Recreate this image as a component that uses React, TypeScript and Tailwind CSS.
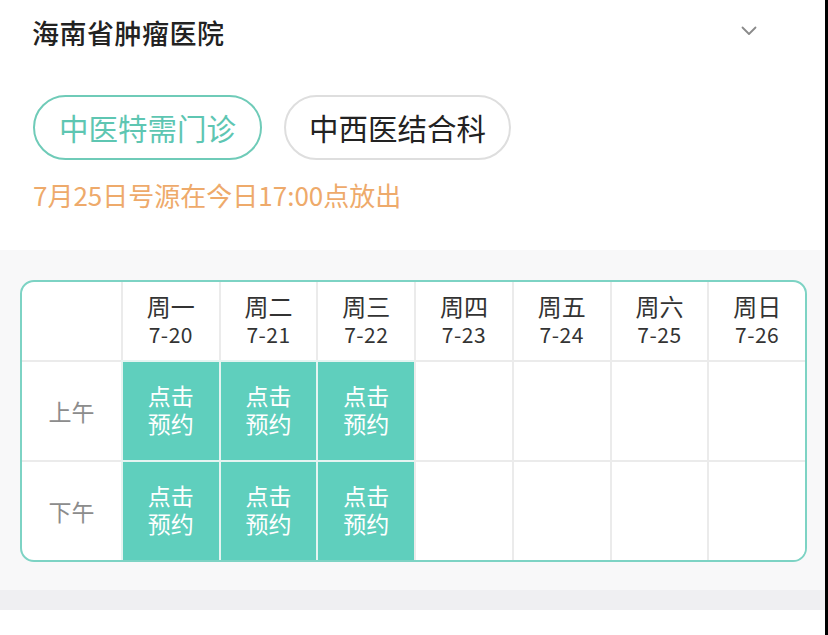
const days = [
  { name: "周一", date: "7-20", open: true },
  { name: "周二", date: "7-21", open: true },
  { name: "周三", date: "7-22", open: true },
  { name: "周四", date: "7-23", open: false },
  { name: "周五", date: "7-24", open: false },
  { name: "周六", date: "7-25", open: false },
  { name: "周日", date: "7-26", open: false },
];

const periods = ["上午", "下午"];

function Chevron() {
  return (
    <svg width="16" height="10" viewBox="0 0 16 10" fill="none" className="mb-[4px]">
      <path d="M1.5 1.5 L8 8 L14.5 1.5" stroke="#8a8a8a" strokeWidth="1.8" strokeLinecap="round" strokeLinejoin="round" />
    </svg>
  );
}

function Schedule() {
  return (
    <div className="ml-[20px] w-[787px] overflow-hidden rounded-[14px] border-2 border-[#7dd3c4] bg-white">
      <div className="grid grid-cols-[99px_repeat(7,1fr)]">
        <div className="h-[78px]" />
        {days.map((d) => (
          <div key={d.name} className="flex h-[78px] flex-col items-center justify-center border-l-2 border-[#ebebeb] pb-[2px] text-[#333]">
            <span className="text-[24px] leading-[28px]">{d.name}</span>
            <span className="text-[21px] leading-[28px] tracking-[0.5px]">{d.date}</span>
          </div>
        ))}
        {periods.map((p) => (
          <div key={p} className="contents">
            <div className="flex h-[100px] items-center justify-center border-t-2 border-[#ebebeb] text-[23px] text-[#8c8c8c]">
              {p}
            </div>
            {days.map((d) => (
              <div
                key={d.name + p}
                className={`flex h-[100px] items-center justify-center border-l-2 border-t-2 pb-[4px] ${
                  d.open ? "border-[#e4f4f1] bg-[#5fcfbd] text-white" : "border-[#ebebeb] bg-white"
                }`}
              >
                {d.open && (
                  <p className="text-center text-[23px] leading-[28px]">
                    点击
                    <br />
                    预约
                  </p>
                )}
              </div>
            ))}
          </div>
        ))}
      </div>
    </div>
  );
}

export default function App() {
  return (
    <div className="flex h-[635px] w-[828px] bg-white font-['Noto_Sans_CJK_SC',sans-serif]">
      <div className="flex w-[825px] flex-col">
        <section className="h-[250px] bg-white">
          <div className="flex h-[66px] items-center justify-between pl-[32px] pr-[68px]">
            <h1 className="text-[27px] font-medium tracking-[0.5px] text-[#222]">海南省肿瘤医院</h1>
            <Chevron />
          </div>
          <div className="mt-[29px] flex gap-[22px] pl-[33px]">
            <button className="flex h-[65px] w-[229px] items-center justify-center rounded-full border-2 border-[#6fcbb8] text-[29.5px] text-[#5ec6b2]">
              中医特需门诊
            </button>
            <button className="flex h-[65px] w-[227px] items-center justify-center rounded-full border-2 border-[#dedede] text-[29.5px] text-[#222]">
              中西医结合科
            </button>
          </div>
          <p className="mt-[18px] pl-[33px] text-[26px] leading-[34px] text-[#eeaa6b]">7月25日号源在今日17:00点放出</p>
        </section>
        <section className="h-[340px] bg-[#f8f8f9] pt-[30px]">
          <Schedule />
        </section>
        <div className="h-[20px] bg-[#efeff2]" />
        <div className="flex-1 bg-white" />
      </div>
      <div className="w-[3px] bg-black" />
    </div>
  );
}
